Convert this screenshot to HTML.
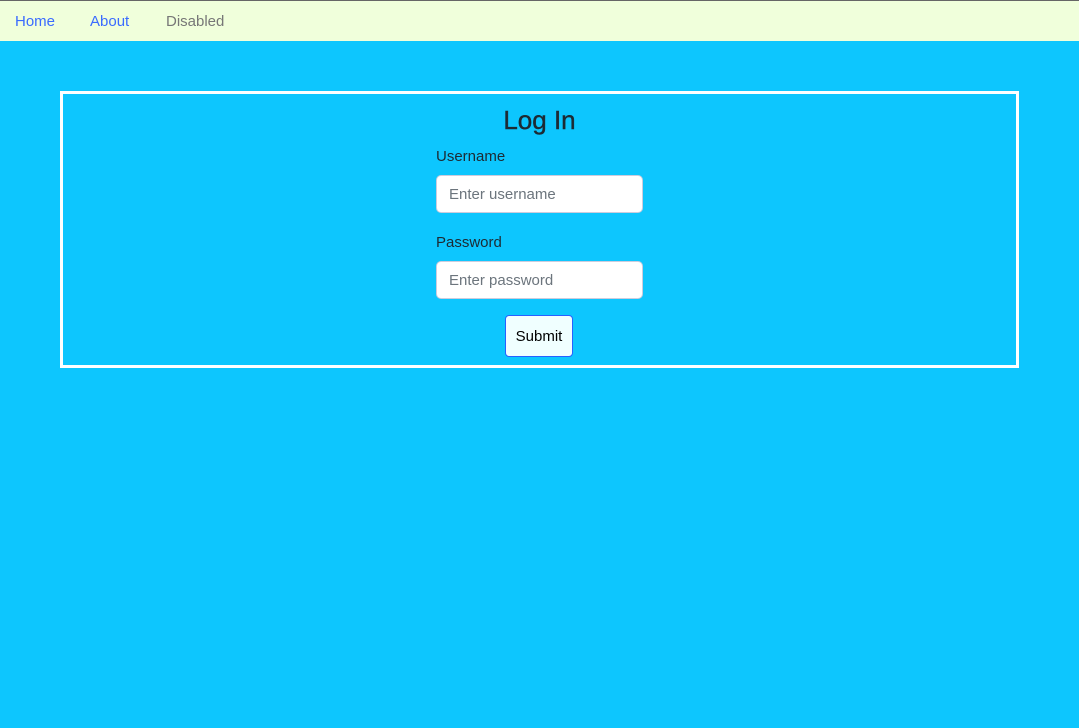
<!DOCTYPE html>
<html><head><style>
*{box-sizing:border-box;margin:0;padding:0}
body{width:1079px;height:728px;background:#0dc6fe;font-family:"Liberation Sans",sans-serif;overflow:hidden;position:relative}
.nav{position:absolute;left:0;top:0;width:1079px;height:41px;background:#f0ffdb;border-top:1px solid #666}
.nav a{position:absolute;top:12px;font-size:15px;text-decoration:none;color:#3a6bff}
.box{position:absolute;left:60px;top:91px;width:959px;height:277px;border:3px solid #fff}
h1{position:absolute;left:0;width:1079px;top:105px;text-align:center;font-size:26px;font-weight:normal;color:#1d2a33;-webkit-text-stroke:0.4px #1d2a33}
.lbl{position:absolute;left:436px;font-size:15px;color:#1d2a33}
.in{position:absolute;left:436px;width:207px;height:38px;background:#fff;border:1px solid #ccd;border-radius:5px;font-size:15px;color:#6c757d;padding:10px 12px}
.btn{position:absolute;left:505px;top:315px;width:68px;height:42px;background:#f0ffff;border:1px solid #2860ff;border-radius:4px;font-size:15px;color:#000;text-align:center;line-height:42px}
</style></head><body>
<div class="nav"><a style="left:15px">Home</a><a style="left:90px">About</a><a style="left:166px;color:#777">Disabled</a></div>
<div class="box"></div>
<h1>Log In</h1>
<div class="lbl" style="top:148px">Username</div>
<div class="in" style="top:175px">Enter username</div>
<div class="lbl" style="top:234px">Password</div>
<div class="in" style="top:261px">Enter password</div>
<div class="btn">Submit</div>
</body></html>
